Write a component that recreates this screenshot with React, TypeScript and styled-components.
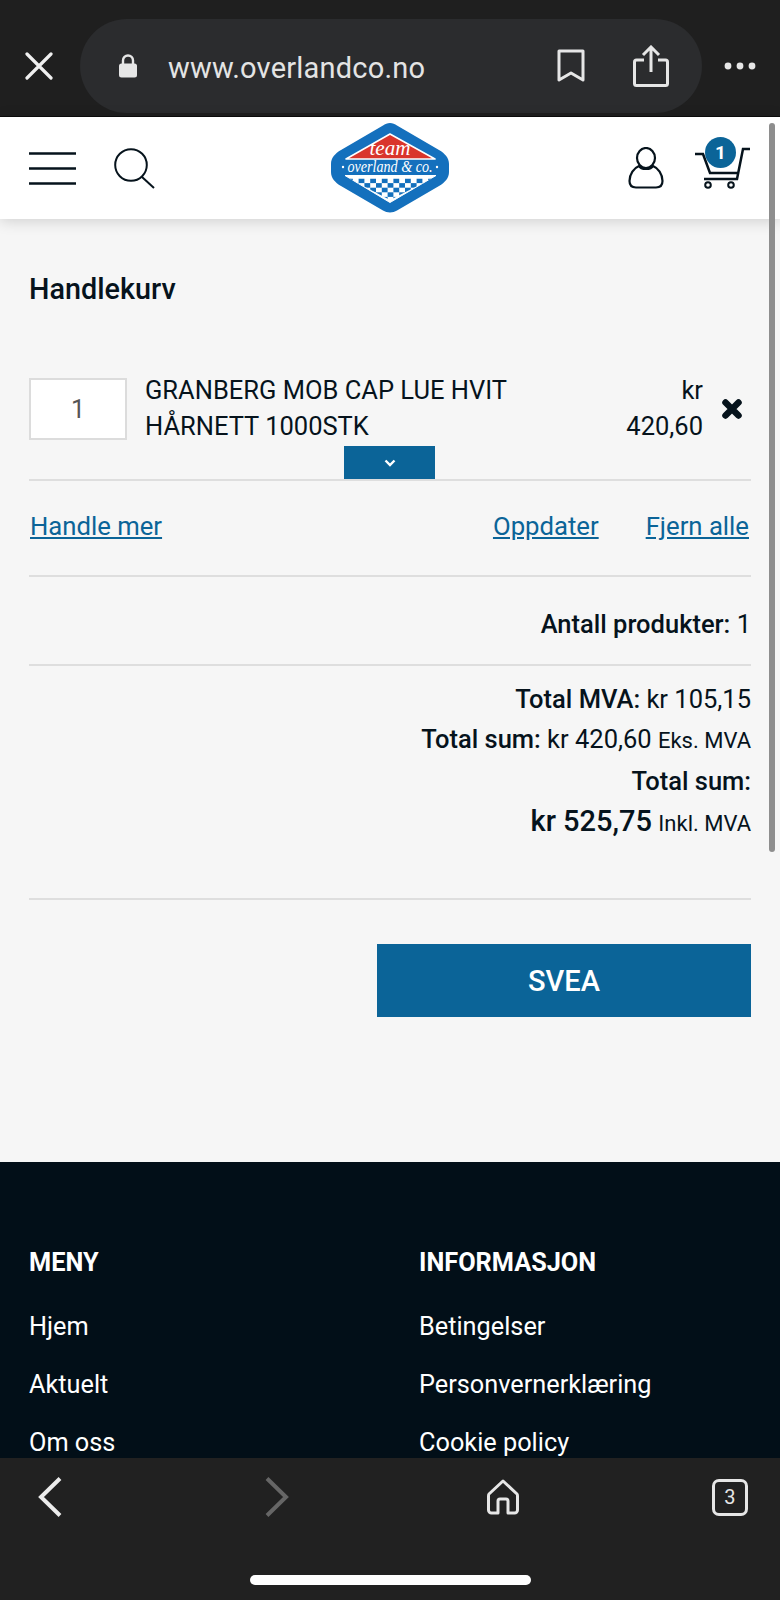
import React from 'react';
import styled, { createGlobalStyle } from 'styled-components';

const GlobalStyle = createGlobalStyle`
  html, body {
    margin: 0;
    padding: 0;
    background: #212121;
  }
  body {
    font-family: Roboto, "Liberation Sans", sans-serif;
  }
`;

const Screen = styled.div`
  position: relative;
  width: 780px;
  height: 1600px;
  display: flex;
  flex-direction: column;
  overflow: hidden;
  background: #f6f6f6;
`;

const BrowserBar = styled.div`
  flex: 0 0 117px;
  box-sizing: border-box;
  padding: 19px 24px 3px 25px;
  display: flex;
  align-items: stretch;
  background: #1f1f1f;
  border-bottom: 1px solid #0c0c0c;
`;

const CloseButton = styled.div`
  flex: 0 0 55px;
  display: flex;
  align-items: center;
`;

const UrlPill = styled.div`
  flex: 1;
  display: flex;
  align-items: center;
  padding: 0 33px 0 38px;
  border-radius: 47px;
  background: #2b2c2e;
`;

const UrlText = styled.span`
  margin-left: 30px;
  margin-top: 3px;
  flex: 1;
  color: #e4e4e4;
  font-size: 29px;
  letter-spacing: 0.2px;
`;

const PillIcons = styled.div`
  display: flex;
  align-items: center;
  gap: 47px;
`;

const MoreButton = styled.div`
  flex: 0 0 54px;
  display: flex;
  align-items: center;
  justify-content: flex-end;
`;

const Header = styled.header`
  flex: 0 0 102px;
  display: flex;
  align-items: center;
  justify-content: space-between;
  box-sizing: border-box;
  padding: 0 29px 0 29px;
  background: #fff;
  box-shadow: 0 2px 14px rgba(0, 0, 0, 0.16);
  z-index: 1;
`;

const HeaderSide = styled.div<{ $gap: number; $end?: boolean }>`
  flex: 0 0 240px;
  display: flex;
  align-items: center;
  gap: ${p => p.$gap}px;
  justify-content: ${p => (p.$end ? 'flex-end' : 'flex-start')};
`;

const CartWrap = styled.div`
  position: relative;
  width: 56px;
  height: 56px;
`;

const CartBadge = styled.span`
  position: absolute;
  top: -3px;
  left: 10px;
  width: 31px;
  height: 31px;
  border-radius: 50%;
  background: #0b6498;
  color: #fff;
  font-size: 19px;
  font-weight: 700;
  line-height: 31px;
  text-align: center;
`;

const Main = styled.main`
  flex: 0 0 943px;
  box-sizing: border-box;
  padding: 54px 29px 0;
  color: #06131c;
`;

const Title = styled.h1`
  margin: 0;
  height: 74px;
  font-size: 28.8px;
  font-weight: 500;
  line-height: 32px;
`;

const CartRow = styled.div`
  position: relative;
  display: flex;
  margin-top: 30px;
  height: 102px;
  border-bottom: 2px solid #dedede;
`;

const QtyBox = styled.div`
  flex: 0 0 98px;
  box-sizing: border-box;
  height: 62px;
  margin-top: 1px;
  display: flex;
  align-items: center;
  justify-content: center;
  background: #fff;
  border: 2px solid #dcdcdc;
  color: #555;
  font-size: 25px;
`;

const ProductName = styled.div`
  flex: 1;
  margin-left: 18px;
  font-size: 25.5px;
  line-height: 36px;
  margin-top: -5px;
`;

const Price = styled.div`
  flex: 0 0 90px;
  font-size: 25.5px;
  line-height: 36px;
  margin-top: -5px;
  text-align: right;
`;

const RemoveButton = styled.div`
  flex: 0 0 48px;
  display: flex;
  justify-content: flex-end;
  padding: 21px 8px 0 0;
  box-sizing: border-box;
`;

const ExpandTab = styled.div`
  position: absolute;
  left: 315px;
  bottom: 0;
  width: 91px;
  height: 33px;
  display: flex;
  align-items: center;
  justify-content: center;
  background: #0b6498;
`;

const LinkRow = styled.div`
  display: flex;
  align-items: center;
  box-sizing: border-box;
  height: 96px;
  padding: 0 2px 5px 1px;
  gap: 47px;
  border-bottom: 2px solid #dedede;
`;

const CartLink = styled.a`
  color: #0b6498;
  font-size: 25.7px;
  text-decoration: underline;
  &:first-child {
    margin-right: auto;
  }
`;

const CountRow = styled.div`
  height: 89px;
  box-sizing: border-box;
  padding-top: 6px;
  display: flex;
  align-items: center;
  justify-content: flex-end;
  font-size: 25.5px;
  border-bottom: 2px solid #dedede;
`;

const Totals = styled.div`
  height: 234px;
  box-sizing: border-box;
  padding-top: 13px;
  border-bottom: 2px solid #dedede;
  text-align: right;
  font-size: 25.5px;
  line-height: 40px;
`;

const Strong = styled.b`
  font-weight: 500;
`;

const Small = styled.span`
  font-size: 22px;
`;

const GrandTotal = styled.b`
  font-size: 29px;
  font-weight: 500;
`;

const CheckoutRow = styled.div`
  display: flex;
  justify-content: flex-end;
  margin-top: 44px;
`;

const CheckoutButton = styled.button`
  width: 374px;
  height: 73px;
  border: 0;
  background: #0b6498;
  color: #fff;
  font-family: inherit;
  font-size: 29px;
  font-weight: 500;
`;

const Footer = styled.footer`
  flex: 0 0 296px;
  box-sizing: border-box;
  padding: 86px 29px 0;
  display: grid;
  grid-template-columns: 390px 1fr;
  align-content: start;
  background: #020f18;
  color: #fff;
  overflow: hidden;
`;

const FooterHeading = styled.div`
  font-size: 25.3px;
  font-weight: 700;
  line-height: 30px;
  margin-bottom: 20px;
`;

const FooterLink = styled.div`
  font-size: 25.3px;
  line-height: 58px;
`;

const BottomBar = styled.div`
  flex: 0 0 142px;
  background: #212121;
  display: flex;
  flex-direction: column;
  padding-top: 19px;
  box-sizing: border-box;
`;

const BottomIcons = styled.div`
  display: grid;
  grid-template-columns: repeat(4, 226.5px);
  justify-content: center;
  justify-items: center;
  align-items: center;
  height: 40px;
`;

const HomeIndicator = styled.div`
  width: 281px;
  height: 10px;
  margin: 58px auto 0;
  border-radius: 5px;
  background: #fff;
`;

const Scrollbar = styled.div`
  position: absolute;
  top: 123px;
  right: 5px;
  width: 6px;
  height: 729px;
  border-radius: 3px;
  background: #8e8e8e;
  z-index: 2;
`;

const TabCount = styled.span`
  width: 36px;
  height: 37px;
  box-sizing: border-box;
  display: flex;
  align-items: center;
  justify-content: center;
  border: 3px solid #e6e6e6;
  border-radius: 7px;
  color: #e6e6e6;
  font-size: 20px;
`;

const checkerRows = [0, 1, 2, 3, 4];
const checkerCols = Array.from({ length: 15 }, (_, i) => i);

const Logo = () => (
  <svg width="120" height="92" viewBox="0 0 120 92">
    <defs>
      <clipPath id="checkerClip">
        <path d="M19 56.500 H102 L60 78 Z" />
      </clipPath>
    </defs>
    <path
      d="M60 1 C62.500 1 65 2 67 3.500 L109 28 C115 31.500 119 36 119 42 L119 50 C119 56 115 60.500 109 64 L67 88.500 C63 91 57 91 53 88.500 L11 64 C5 60.500 1 56 1 50 L1 42 C1 36 5 31.500 11 28 L53 3.500 C55 2 57.500 1 60 1 Z"
      fill="#1470bd"
    />
    <path d="M60 12 L105 37 L16 37 Z" fill="#d9352c" stroke="#fff" strokeWidth="1.6" strokeLinejoin="round" />
    <text x="60" y="33" textAnchor="middle" fontFamily="'Liberation Serif', serif" fontStyle="italic" fontSize="20" textLength="41" lengthAdjust="spacingAndGlyphs" fill="#fff">team</text>
    <text x="60" y="50" textAnchor="middle" fontFamily="'Liberation Serif', serif" fontStyle="italic" fontSize="17" textLength="85" lengthAdjust="spacingAndGlyphs" fill="#fff">overland &amp; co.</text>
    <circle cx="13" cy="45" r="1.2" fill="#fff" />
    <circle cx="107" cy="45" r="1.2" fill="#fff" />
    <path d="M15 53.500 H106 L60 80.500 Z" fill="#fff" stroke="#fff" strokeWidth="1" strokeLinejoin="round" />
    <g clipPath="url(#checkerClip)" fill="#1470bd">
      {checkerRows.map(row =>
        checkerCols
          .filter(col => (row + col) % 2 === 0)
          .map(col => (
            <rect key={`${row}-${col}`} x={17 + col * 5.8} y={56.5 + row * 4.6} width="5.8" height="4.6" />
          ))
      )}
    </g>
  </svg>
);

const App: React.FC = () => (
  <Screen>
    <GlobalStyle />
    <BrowserBar>
      <CloseButton>
        <svg width="28" height="28" viewBox="0 0 28 28">
          <path d="M2 2 L26 26 M26 2 L2 26" stroke="#f0f0f0" strokeWidth="3.2" strokeLinecap="round" />
        </svg>
      </CloseButton>
      <UrlPill>
        <svg width="20" height="24" viewBox="0 0 20 24">
          <rect x="1" y="9.500" width="18" height="14" rx="2.500" fill="#e6e6e6" />
          <path d="M5 11 V6.500 a5 5 0 0 1 10 0 V11" fill="none" stroke="#e6e6e6" strokeWidth="2.400" />
        </svg>
        <UrlText>www.overlandco.no</UrlText>
        <PillIcons>
          <svg width="30" height="34" viewBox="0 0 30 34">
            <path d="M3 2 H27 V31 L15 24 L3 31 Z" fill="none" stroke="#e6e6e6" strokeWidth="3" strokeLinejoin="round" />
          </svg>
          <svg width="36" height="42" viewBox="0 0 36 42">
            <path d="M18 27 V3 M10 10 L18 2 L26 10" fill="none" stroke="#e6e6e6" strokeWidth="3" />
            <path d="M11 15 H3.500 a2 2 0 0 0 -2 2 V38.500 a2 2 0 0 0 2 2 H32.500 a2 2 0 0 0 2 -2 V17 a2 2 0 0 0 -2 -2 H25" fill="none" stroke="#e6e6e6" strokeWidth="3" />
          </svg>
        </PillIcons>
      </UrlPill>
      <MoreButton>
        <svg width="32" height="8" viewBox="0 0 32 8">
          <circle cx="4" cy="4" r="3.400" fill="#e6e6e6" />
          <circle cx="16" cy="4" r="3.400" fill="#e6e6e6" />
          <circle cx="28" cy="4" r="3.400" fill="#e6e6e6" />
        </svg>
      </MoreButton>
    </BrowserBar>

    <Header>
      <HeaderSide $gap={38}>
        <svg width="47" height="33" viewBox="0 0 47 33">
          <path d="M0 1.500 H47 M0 16.500 H47 M0 31.500 H47" stroke="#06131c" strokeWidth="2.400" />
        </svg>
        <svg width="41" height="41" viewBox="0 0 41 41">
          <circle cx="17" cy="17" r="15.800" fill="none" stroke="#06131c" strokeWidth="2" />
          <path d="M28 29 L40 40" stroke="#06131c" strokeWidth="2" />
        </svg>
      </HeaderSide>
      <Logo />
      <HeaderSide $gap={31} $end>
        <svg width="36" height="42" viewBox="0 0 36 42">
          <ellipse cx="18" cy="11" rx="9" ry="10" fill="none" stroke="#06131c" strokeWidth="2.200" />
          <path d="M11 19 C6 21 1.500 27 1.500 34 C1.500 38 4 40.500 8 40.500 H28 C32 40.500 34.500 38 34.500 34 C34.500 27 30 21 25 19 C23 23 13 23 11 19 Z" fill="none" stroke="#06131c" strokeWidth="2.200" />
        </svg>
        <CartWrap>
          <svg width="56" height="56" viewBox="0 0 56 56">
            <path d="M0 14 H8 L15 33 H44 M55 9 H48 L42 39 H9" fill="none" stroke="#06131c" strokeWidth="2.500" />
            <circle cx="13" cy="45" r="2.800" fill="none" stroke="#06131c" strokeWidth="2" />
            <circle cx="36" cy="45" r="2.800" fill="none" stroke="#06131c" strokeWidth="2" />
          </svg>
          <CartBadge>1</CartBadge>
        </CartWrap>
      </HeaderSide>
    </Header>

    <Main>
      <Title>Handlekurv</Title>
      <CartRow>
        <QtyBox>1</QtyBox>
        <ProductName>GRANBERG MOB CAP LUE HVIT<br />HÅRNETT 1000STK</ProductName>
        <Price>kr<br />420,60</Price>
        <RemoveButton>
          <svg width="22" height="22" viewBox="0 0 22 22">
            <path d="M4.500 4.500 L17.500 17.500 M17.500 4.500 L4.500 17.500" stroke="#06131c" strokeWidth="6.500" strokeLinecap="round" />
          </svg>
        </RemoveButton>
        <ExpandTab>
          <svg width="12" height="8" viewBox="0 0 12 8">
            <path d="M1.500 1.500 L6 6 L10.500 1.500" fill="none" stroke="#fff" strokeWidth="2.400" />
          </svg>
        </ExpandTab>
      </CartRow>
      <LinkRow>
        <CartLink>Handle mer</CartLink>
        <CartLink>Oppdater</CartLink>
        <CartLink>Fjern alle</CartLink>
      </LinkRow>
      <CountRow>
        <span><Strong>Antall produkter:</Strong> 1</span>
      </CountRow>
      <Totals>
        <div><Strong>Total MVA:</Strong> kr 105,15</div>
        <div><Strong>Total sum:</Strong> kr 420,60 <Small>Eks. MVA</Small></div>
        <div><Strong>Total sum:</Strong></div>
        <div><GrandTotal>kr 525,75</GrandTotal> <Small>Inkl. MVA</Small></div>
      </Totals>
      <CheckoutRow>
        <CheckoutButton>SVEA</CheckoutButton>
      </CheckoutRow>
    </Main>

    <Footer>
      <div>
        <FooterHeading>MENY</FooterHeading>
        <FooterLink>Hjem</FooterLink>
        <FooterLink>Aktuelt</FooterLink>
        <FooterLink>Om oss</FooterLink>
      </div>
      <div>
        <FooterHeading>INFORMASJON</FooterHeading>
        <FooterLink>Betingelser</FooterLink>
        <FooterLink>Personvernerklæring</FooterLink>
        <FooterLink>Cookie policy</FooterLink>
      </div>
    </Footer>

    <BottomBar>
      <BottomIcons>
        <svg width="24" height="40" viewBox="0 0 24 40">
          <path d="M22 1.500 L3 20 L22 38.500" fill="none" stroke="#ececec" strokeWidth="4" />
        </svg>
        <svg width="24" height="40" viewBox="0 0 24 40">
          <path d="M2 1.500 L21 20 L2 38.500" fill="none" stroke="#666" strokeWidth="4" />
        </svg>
        <svg width="32" height="36" viewBox="0 0 32 36">
          <path d="M16 2 L30 15 C30.500 15.500 30.500 16 30.500 17 V31 a3 3 0 0 1 -3 3 H21 V22 a2 2 0 0 0 -2 -2 H13 a2 2 0 0 0 -2 2 V34 H4.500 a3 3 0 0 1 -3 -3 V17 C1.500 16 1.500 15.500 2 15 Z" fill="none" stroke="#e6e6e6" strokeWidth="3" strokeLinejoin="round" />
        </svg>
        <TabCount>3</TabCount>
      </BottomIcons>
      <HomeIndicator />
    </BottomBar>

    <Scrollbar />
  </Screen>
);

export default App;
